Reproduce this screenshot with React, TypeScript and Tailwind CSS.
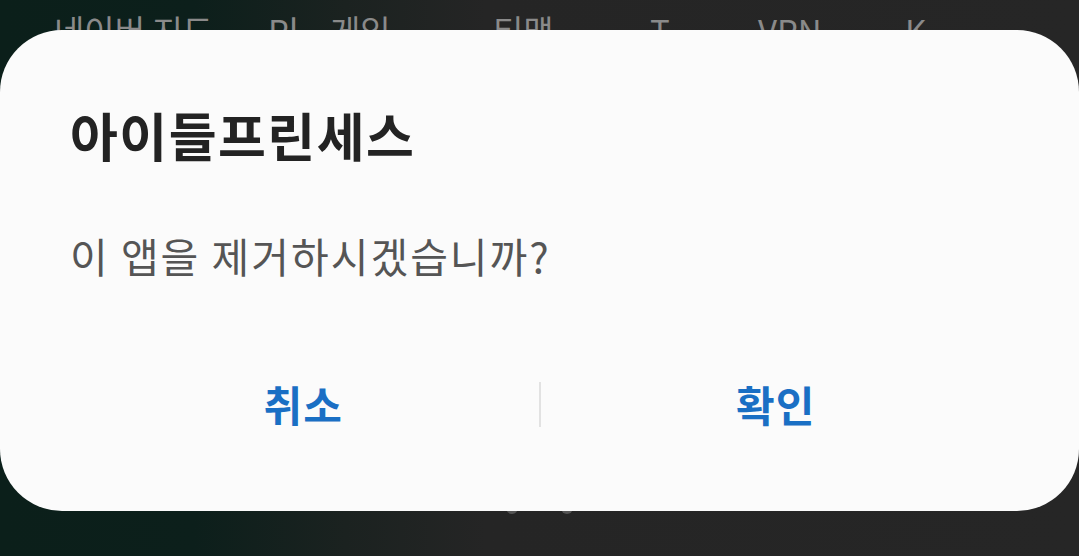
import React from "react";

const labels = [
  { t: "네이버 지도", x: 54 },
  { t: "Pl", x: 268 },
  { t: "게임", x: 330 },
  { t: "티맵", x: 493 },
  { t: "T", x: 650 },
  { t: "VPN", x: 758 },
  { t: "K", x: 905 },
];

export default function App() {
  return (
    <div
      className="relative w-[1079px] h-[556px] overflow-hidden bg-[linear-gradient(90deg,#0b1f1a_0%,#0c1f1b_18%,#1b2220_32%,#252525_45%,#262626_100%)]"
      style={{ fontFamily: '"Noto Sans CJK KR", "Noto Sans", sans-serif' }}
    >
      {/* home screen labels behind the dialog */}
      {labels.map((l) => (
        <span
          key={l.t}
          className="absolute top-[10px] text-[33px] leading-[40px] text-[#8a8a8a] whitespace-nowrap"
          style={{ left: l.x }}
        >
          {l.t}
        </span>
      ))}
      {/* page indicator dots */}
      <span className="absolute left-[506px] top-[500px] w-[12px] h-[14px] rounded-full bg-[#555]" />
      <span className="absolute left-[561px] top-[500px] w-[12px] h-[14px] rounded-full bg-[#555]" />

      <div className="relative mt-[30px] h-[481px] w-full rounded-[62px] bg-[#fbfbfb] flex flex-col">
        <h1 className="pl-[70px] pt-[75px] text-[52px] leading-[60px] tracking-[1.5px] font-bold text-[#232323]">
          아이들프린세스
        </h1>
        <p className="pl-[70px] mt-[65px] text-[41px] leading-[50px] tracking-[2px] text-[#555555]">
          이 앱을 제거하시겠습니까?
        </p>
        <div className="mt-[94px] px-[68px] flex items-center">
          <button className="flex-1 text-center text-[42px] leading-[60px] tracking-[1px] font-bold text-[#1a6fc4]">
            취소
          </button>
          <div className="w-[2px] h-[45px] bg-[#e2e2e2]" />
          <button className="flex-1 text-center text-[42px] leading-[60px] tracking-[1px] font-bold text-[#1a6fc4]">
            확인
          </button>
        </div>
      </div>
    </div>
  );
}
